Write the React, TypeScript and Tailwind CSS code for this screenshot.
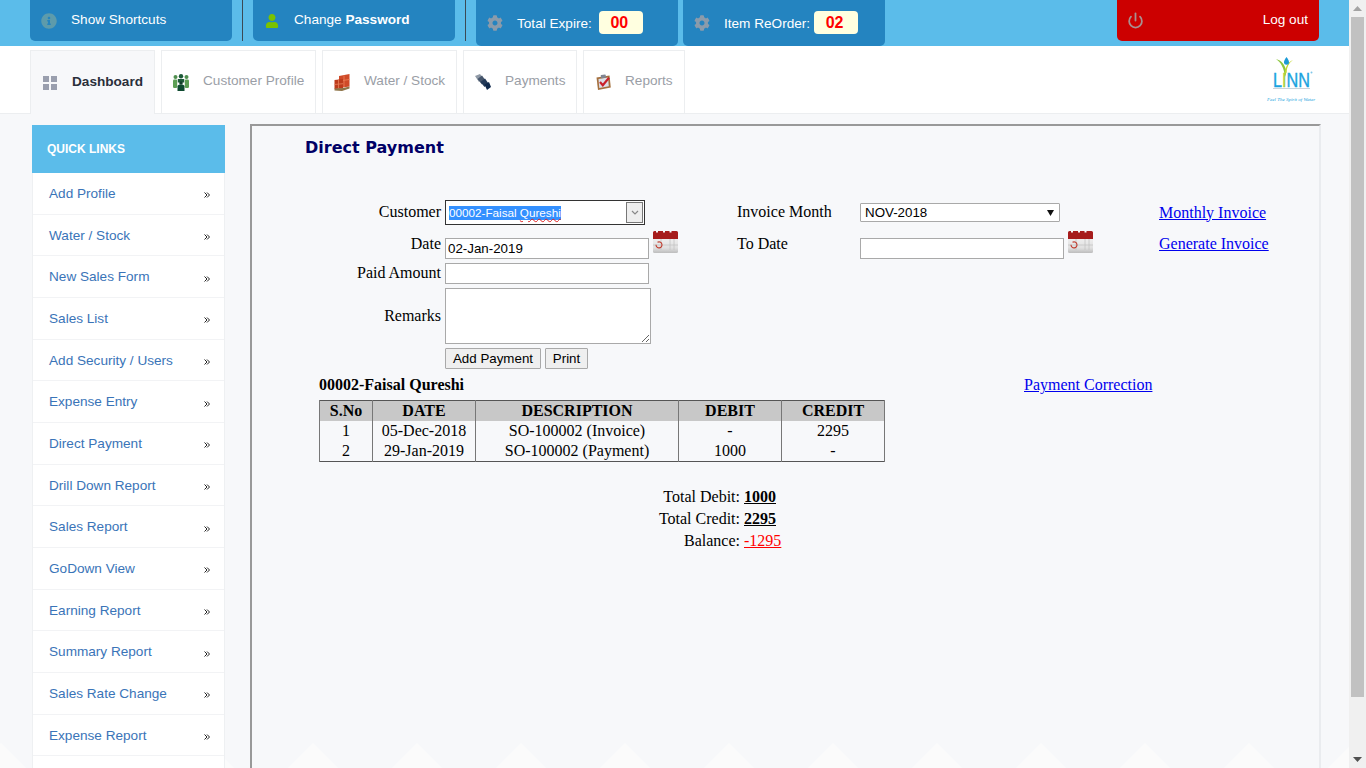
import * as React from 'react';
import { FaCog, FaInfoCircle, FaUser } from 'react-icons/fa';
import { Power } from 'lucide-react';

const serif = "font-['Liberation_Serif','Times_New_Roman',serif]";

const quickLinks = [
  'Add Profile',
  'Water / Stock',
  'New Sales Form',
  'Sales List',
  'Add Security / Users',
  'Expense Entry',
  'Direct Payment',
  'Drill Down Report',
  'Sales Report',
  'GoDown View',
  'Earning Report',
  'Summary Report',
  'Sales Rate Change',
  'Expense Report',
];

const ledger = [
  { no: 1, date: '05-Dec-2018', description: 'SO-100002 (Invoice)', debit: '-', credit: '2295' },
  { no: 2, date: '29-Jan-2019', description: 'SO-100002 (Payment)', debit: '1000', credit: '-' },
];

// Small images from the tab strip
const DashboardIcon = () => (
  <svg width="14" height="14" viewBox="0 0 14 14" fill="#9a9fae">
    <rect x="0" y="0" width="6" height="6" />
    <rect x="8" y="0" width="6" height="6" />
    <rect x="0" y="8" width="6" height="6" />
    <rect x="8" y="8" width="6" height="6" />
  </svg>
);

const PeopleIcon = () => (
  <svg width="16" height="17" viewBox="0 0 16 17">
    <circle cx="2.5" cy="3" r="2" fill="#4f8f4f" />
    <circle cx="13.5" cy="3" r="2" fill="#4f8f4f" />
    <circle cx="8" cy="2.2" r="2.2" fill="#1d5a38" />
    <rect x="0" y="5.5" width="4.2" height="8.500" rx="1.2" fill="#5d9f55" />
    <rect x="11.8" y="5.5" width="4.2" height="8.500" rx="1.2" fill="#5d9f55" />
    <path d="M4.8 5h6.4v3.500H4.800z" fill="#1d5a38" />
    <circle cx="8" cy="9" r="1.800" fill="#123f2a" />
    <path d="M4.500 17v-4.500C4.500 11 6 10.500 8 10.500s3.500.5 3.500 2V17z" fill="#0f4a30" />
  </svg>
);

const BoxesIcon = () => (
  <svg width="16" height="17" viewBox="0 0 16 17">
    <path d="M5 2L15.500 0v12.500L5 14z" fill="#cf4a28" />
    <path d="M10 1.500v11.500M5 7l10.500-1.500" stroke="#ee8258" strokeWidth="0.800" />
    <path d="M0.500 6L9 5v9.500l-8.500.5z" fill="#bd3b1c" />
    <path d="M4.500 5.500v9M.5 10.500l8.500-.8" stroke="#e8805a" strokeWidth="0.800" />
    <path d="M0.500 14.500l8.500-.5 6.500-1.500v2L8 17l-7.500-.5z" fill="#8e7448" />
  </svg>
);

const HandIcon = () => (
  <svg width="16" height="16" viewBox="0 0 16 16">
    <path d="M0 2L5 0l3 4-4 4z" fill="#8f99a6" />
    <path d="M2.500 5L7 1.500l4 5.500-4 3.500z" fill="#46566c" />
    <path d="M5.500 8L10 4.500l3.500 5L9.500 13z" fill="#243a58" />
    <path d="M9.500 10.500L14 8l2 5-4 3z" fill="#10294c" />
  </svg>
);

const ClipboardIcon = () => (
  <svg width="16" height="16" viewBox="0 0 16 16">
    <path d="M1.500 3.500L14.500 1.500 15.800 13.500 3 16z" fill="#a5713f" />
    <path d="M3.500 5L13 3.500 13.800 12.300 4.300 14z" fill="#dcdfe8" />
    <rect x="5.800" y="0.800" width="5" height="3.200" rx="0.500" fill="#7f8592" transform="rotate(-8 8 2)" />
    <path d="M5 8l2.800 3.200L14 3.800" fill="none" stroke="#c9202a" strokeWidth="2.200" />
  </svg>
);

const CalendarIcon = () => (
  <svg width="25" height="23" viewBox="0 0 25 23" className="shrink-0">
    <defs>
      <linearGradient id="calendar-body" x1="0" y1="0" x2="0" y2="1">
        <stop offset="0" stopColor="#f2f2f2" />
        <stop offset="0.7" stopColor="#e0e0e0" />
        <stop offset="1" stopColor="#bdbdbd" />
      </linearGradient>
    </defs>
    <rect x="0" y="6" width="25" height="17" rx="1.500" fill="url(#calendar-body)" />
    <path d="M0 2.500A1.500 1.500 0 0 1 1.500 1H3v1.500h2V1h5v1.500h2V1h4.500v1.500h2V1h5A1.500 1.500 0 0 1 25 2.500V9H0z" fill="#a61c1c" />
    <path d="M0 15h25M8 9v11M17 9v11M21 9v11" stroke="#c4c4c4" strokeWidth="0.800" />
    <path d="M3 14.800a3 3 0 1 0 1.500-2.500" fill="none" stroke="#c0392b" strokeWidth="1.100" />
  </svg>
);

const LinnLogo = () => (
  <svg width="52" height="50" viewBox="0 0 52 50">
    <path d="M11 4c5.500 1.500 9 5.500 10.500 13l-1.500 5C19 13 16 7.500 11 4z" fill="#8dc63f" />
    <path d="M28 5c-4 2.500-6 6.500-6.500 12l-2 5c.2-9.500 3-15 8.500-17z" fill="#c4d82e" />
    <path d="M21.500 2c-1.600 2.200-2.500 3.800-2.500 5.200a2.500 2.500 0 0 0 5 0C24 5.800 23.100 4.200 21.500 2z" fill="#1c9ad6" />
    <text
      transform="translate(8 32) scale(0.81 1)"
      fontFamily="'Liberation Sans', Arial, sans-serif"
      fontSize="20"
      fill="#1aa3e0"
      stroke="#1aa3e0"
      strokeWidth="0.400"
    >
      L<tspan fill="#a8cf38" stroke="#a8cf38">I</tspan>NN
    </text>
    <circle cx="46.500" cy="17.500" r="1" fill="#7fc7ea" />
    <rect x="8" y="33" width="37" height="1" fill="#c9d3da" />
    <text x="2" y="46" fontFamily="'Liberation Serif', serif" fontStyle="italic" fontSize="5" fill="#1aa3e0">
      Feel The Spirit of Water
    </text>
  </svg>
);

const MoreArrow = () => (
  <svg width="6" height="6" viewBox="0 0 6 6" fill="none" stroke="#222" strokeWidth="1">
    <path d="M0.500 0.500L3 3 0.500 5.500M3 0.500L5.500 3 3 5.500" />
  </svg>
);

function TopButton({ className, children }: { className: string; children: React.ReactNode }) {
  return (
    <div className={`w-[202px] flex items-center bg-[#2484c0] rounded-b-[5px] text-[13.6px] text-white ${className}`}>
      {children}
    </div>
  );
}

function NavTab({
  width,
  label,
  icon,
  active,
}: {
  width: string;
  label: string;
  icon: React.ReactNode;
  active?: boolean;
}) {
  return (
    <div
      className={`${width} flex items-center border border-b-0 border-[#eceef0] ${
        active
          ? 'h-[64px] -mb-px pl-3 bg-[#f7f8fa] font-bold text-[#2a2f3a]'
          : 'h-[63px] pl-[11px] bg-white text-[#9a9ea6]'
      }`}
    >
      <span className={`${active ? 'w-[29px]' : 'w-[30px]'} shrink-0 flex`}>{icon}</span>
      <span className="-mt-px text-[13.6px] whitespace-nowrap">{label}</span>
    </div>
  );
}

function Zigzag() {
  const peaks = Array.from({ length: 14 }, (_, i) => 1 + i * 104);
  return (
    <svg className="absolute left-0 bottom-0" width="1349" height="25" viewBox="0 0 1349 25">
      {peaks.map((x) => (
        <polygon key={x} points={`${x - 25},25 ${x},0 ${x + 25},25`} fill="#fbfbfb" />
      ))}
    </svg>
  );
}

const fieldClass = "w-[204px] h-[21px] border border-[#a9a9a9] bg-white px-0.5 text-[13.33px] text-black outline-none font-['Liberation_Sans',Arial,sans-serif]";
const linkClass = 'text-[#0000ee] underline';
const buttonClass = "h-[21px] border border-[#a9a9a9] bg-[#efefef] text-[13.33px] text-black rounded-[1px] font-['Liberation_Sans',Arial,sans-serif]";
const badgeClass = 'w-[44px] h-[23px] flex items-center justify-center pr-[3px] pt-[2px] rounded bg-[#ffffe0] text-base font-bold text-[#ff0000] -mt-0.5';
const cellClass = 'border-x border-[#777] text-center p-0 leading-[20px] font-normal';
const headClass = 'border-x border-[#777] text-center p-0 leading-[20px] font-bold';

export default function App() {
  return (
    <div className="h-screen flex overflow-hidden bg-white font-['Liberation_Sans',Arial,sans-serif]">
      <div className="flex-1 min-w-0 flex flex-col">
        {/* Top bar */}
        <header className="h-[46px] shrink-0 flex items-start bg-[#5bbcea] pl-[30px]">
          <TopButton className="h-[41px]">
            <FaInfoCircle className="ml-[11px] text-[#5d9bab]" size={16} />
            <span className="ml-[14px] -mt-px">Show Shortcuts</span>
          </TopButton>
          <div className="w-px h-[41px] bg-[#3b4a55] ml-[10px] mr-[10px]" />
          <TopButton className="h-[41px]">
            <FaUser className="ml-3 text-[#7ac200]" size={14} />
            <span className="ml-[15px] -mt-px">
              Change <b>Password</b>
            </span>
          </TopButton>
          <div className="w-px h-[41px] bg-[#3b4a55] ml-[10px] mr-[10px]" />
          <TopButton className="h-[46px]">
            <FaCog className="ml-[11px] text-[#8a9bab]" size={16} />
            <span className="ml-[14px] mr-[7px] mt-[2px]">Total Expire:</span>
            <span className={badgeClass}>00</span>
          </TopButton>
          <TopButton className="h-[46px] ml-[5px]">
            <FaCog className="ml-[11px] text-[#8a9bab]" size={16} />
            <span className="ml-[14px] mr-1 mt-[2px]">Item ReOrder:</span>
            <span className={badgeClass}>02</span>
          </TopButton>
          <div className="ml-auto mr-[30px] w-[202px] h-[41px] flex items-center justify-between bg-[#cc0000] rounded-b-[5px] pl-[10px] pr-[11px] text-[13.6px] text-white">
            <Power className="text-[#a89090]" size={17} strokeWidth={2.5} />
            <span className="-mt-px">Log out</span>
          </div>
        </header>

        {/* Tab strip */}
        <nav className="h-[68px] shrink-0 flex items-end pl-[30px] pr-[32px] gap-[6px] border-b border-[#eceef0] bg-white">
          <NavTab width="w-[125px]" label="Dashboard" icon={<DashboardIcon />} active />
          <NavTab width="w-[155px]" label="Customer Profile" icon={<PeopleIcon />} />
          <NavTab width="w-[135px]" label="Water / Stock" icon={<BoxesIcon />} />
          <NavTab width="w-[114px]" label="Payments" icon={<HandIcon />} />
          <NavTab width="w-[102px]" label="Reports" icon={<ClipboardIcon />} />
          <div className="ml-auto self-center">
            <LinnLogo />
          </div>
        </nav>

        {/* Body */}
        <div className="relative flex-1 min-h-0 bg-[#f7f8fa] pl-[32px] pt-[10px] flex gap-[25px] overflow-hidden">
          <Zigzag />

          <aside className="relative w-[193px] shrink-0 mt-px">
            <div className="h-[48px] flex items-center pl-[15px] bg-[#5bbcea] text-xs font-bold text-white">
              QUICK LINKS
            </div>
            <ul className="bg-white border-x border-[#eef0f2]">
              {quickLinks.map((item) => (
                <li
                  key={item}
                  className="h-[41.67px] flex items-center justify-between pl-[16px] pr-[14px] border-b border-[#f2f3f5] text-[13.6px] text-[#3a74b8]"
                >
                  <span className="mt-[2px]">{item}</span>
                  <span className="mt-[4px]">
                    <MoreArrow />
                  </span>
                </li>
              ))}
              <li className="h-[41.67px]" />
            </ul>
          </aside>

          <main className={`relative w-[1071px] shrink-0 h-[700px] border-t-2 border-l-2 border-t-[#999] border-l-[#999] border-r-2 border-r-[#eaecef] text-base text-black ${serif}`}>
            <h1 className="ml-[53px] mt-[11px] h-[22px] text-base leading-[22px] font-bold text-[#000066] font-['DejaVu_Sans',Verdana,sans-serif]">
              Direct Payment
            </h1>

            <form className="mt-[41px] grid grid-cols-[193px_292px_123px_299px_1fr] grid-rows-[25px_21px_21px_56px_21px] gap-y-1">
              <div className="flex items-center justify-end pr-1 mb-[1px]">Customer</div>
              <div className="w-[200px] h-[25px] relative flex items-center border border-[#333] bg-white pl-[3px] text-[11.7px] font-['Liberation_Sans',Arial,sans-serif]">
                <span className="bg-[#3390ff] text-white leading-[14px] whitespace-nowrap">
                  00002-Faisal{' '}
                  <span className="underline decoration-wavy decoration-[#d22] decoration-1">Qureshi</span>
                </span>
                <span className="absolute right-px top-px w-[17px] h-[21px] flex items-center justify-center bg-[#eeeeee] border border-[#777]">
                  <svg width="8" height="5" viewBox="0 0 8 5" fill="none" stroke="#888" strokeWidth="1.200">
                    <path d="M1 1l3 3 3-3" />
                  </svg>
                </span>
              </div>
              <div className="flex items-center -mt-px">Invoice Month</div>
              <div className="pt-[3px]">
                <div className="w-[200px] h-[19px] flex items-center justify-between border border-[#a9a9a9] rounded-[1px] bg-white pl-1 pr-[5px] text-[13.33px] font-['Liberation_Sans',Arial,sans-serif]">
                  NOV-2018
                  <svg width="7" height="6" viewBox="0 0 7 6" fill="#111">
                    <path d="M0 0h7L3.500 6z" />
                  </svg>
                </div>
              </div>
              <div className="flex items-center">
                <a className={linkClass}>Monthly Invoice</a>
              </div>

              <div className="col-start-1 row-start-2 text-right pr-1 mt-[3px]">Date</div>
              <div className="col-start-2 row-start-2 flex items-start gap-1 mt-[9px]">
                <input className={fieldClass} defaultValue="02-Jan-2019" />
                <div className="-mt-2">
                  <CalendarIcon />
                </div>
              </div>
              <div className="col-start-3 row-start-2 mt-[3px]">To Date</div>
              <div className="col-start-4 row-start-2 flex items-start gap-1 mt-[9px]">
                <input className={fieldClass} />
                <div className="-mt-2">
                  <CalendarIcon />
                </div>
              </div>
              <div className="col-start-5 row-start-2 mt-[3px]">
                <a className={linkClass}>Generate Invoice</a>
              </div>

              <div className="col-start-1 row-start-3 text-right pr-1 mt-[7px]">Paid Amount</div>
              <div className="col-start-2 row-start-3 mt-[9px] flex">
                <input className={fieldClass} />
              </div>

              <div className="col-start-1 row-start-4 h-[55px] flex items-center justify-end pr-1 mt-[9px]">Remarks</div>
              <div className="col-start-2 row-start-4 mt-[9px] flex">
                <textarea className="w-[206px] h-[56px] shrink-0 border border-[#a9a9a9] bg-white outline-none" />
              </div>

              <div className="col-start-2 row-start-5 mt-[9px] flex gap-1">
                <button type="button" className={`${buttonClass} w-[96px]`}>
                  Add Payment
                </button>
                <button type="button" className={`${buttonClass} w-[43px]`}>
                  Print
                </button>
              </div>
            </form>

            <div className="mt-[16px] ml-[67px] flex leading-[18px]">
              <b className="w-[705px]">00002-Faisal Qureshi</b>
              <a className={linkClass}>Payment Correction</a>
            </div>

            <table className="mt-[6px] ml-[67px] w-[565px] table-fixed border-collapse border border-[#555]">
              <colgroup>
                <col className="w-[53px]" />
                <col className="w-[103px]" />
                <col className="w-[203px]" />
                <col className="w-[103px]" />
                <col className="w-[103px]" />
              </colgroup>
              <thead className="bg-[#c8c8c8]">
                <tr>
                  <th className={headClass}>S.No</th>
                  <th className={headClass}>DATE</th>
                  <th className={headClass}>DESCRIPTION</th>
                  <th className={headClass}>DEBIT</th>
                  <th className={headClass}>CREDIT</th>
                </tr>
              </thead>
              <tbody>
                {ledger.map((row) => (
                  <tr key={row.no}>
                    <td className={cellClass}>{row.no}</td>
                    <td className={cellClass}>{row.date}</td>
                    <td className={cellClass}>{row.description}</td>
                    <td className={cellClass}>{row.debit}</td>
                    <td className={cellClass}>{row.credit}</td>
                  </tr>
                ))}
              </tbody>
            </table>

            <div className="mt-[24px] grid grid-cols-[488px_1fr] gap-x-1 auto-rows-[22px] leading-[22px]">
              <span className="text-right">Total Debit:</span>
              <b className="underline">1000</b>
              <span className="text-right">Total Credit:</span>
              <b className="underline">2295</b>
              <span className="text-right">Balance:</span>
              <span className="underline text-[#ff0000]">-1295</span>
            </div>
          </main>
        </div>
      </div>

      {/* Window scrollbar */}
      <div className="w-[17px] shrink-0 flex flex-col items-center bg-[#f0f0f0]">
        <div className="h-[17px] flex items-center justify-center">
          <svg width="9" height="5" viewBox="0 0 9 5" fill="#a3a3a3">
            <path d="M4.500 0L9 5H0z" />
          </svg>
        </div>
        <div className="w-[13px] h-[680px] bg-[#c1c1c1]" />
        <div className="mt-auto h-[17px] flex items-center justify-center">
          <svg width="9" height="5" viewBox="0 0 9 5" fill="#505050">
            <path d="M0 0h9L4.500 5z" />
          </svg>
        </div>
      </div>
    </div>
  );
}
